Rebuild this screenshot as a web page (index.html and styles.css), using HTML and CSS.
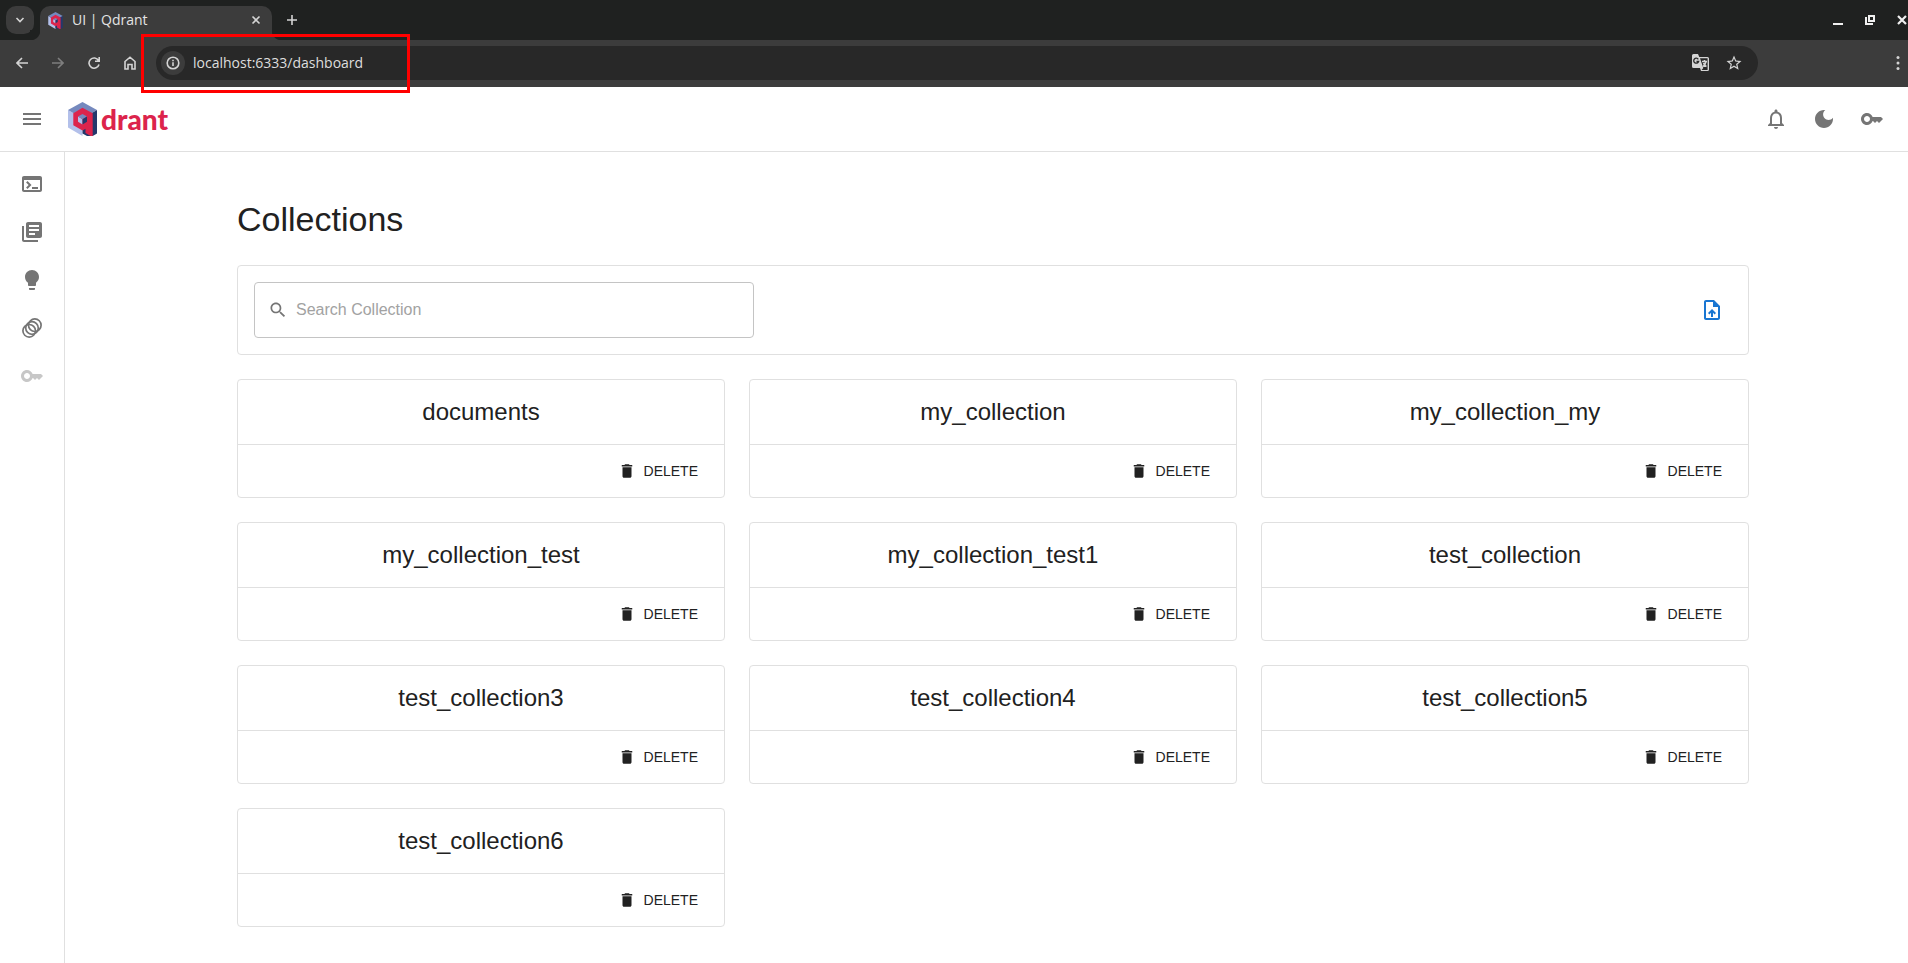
FILE: index.html
```html
<!DOCTYPE html>
<html lang="en">
<head>
<meta charset="utf-8">
<title>UI | Qdrant</title>
<link rel="stylesheet" href="styles.css">
</head>
<body>
<svg class="sprite" aria-hidden="true">
  <symbol id="trash" viewBox="0 0 24 24"><path d="M6 19c0 1.100.9 2 2 2h8c1.100 0 2-.9 2-2V7H6v12zM19 4h-3.500l-1-1h-5l-1 1H5v2h14V4z"/></symbol>
  <symbol id="key" viewBox="0 0 24 24"><path d="M21 10h-8.350C11.830 7.670 9.610 6 7 6c-3.310 0-6 2.690-6 6s2.690 6 6 6c2.610 0 4.830-1.670 5.650-4H13l2 2 2-2 2 2 4-4.040L21 10zM7 15c-1.650 0-3-1.350-3-3s1.350-3 3-3 3 1.350 3 3-1.350 3-3 3z"/></symbol>
  <symbol id="cube" viewBox="0 0 29 34">
    <path fill="#b3c0ea" d="M0 8 14.500 16.500V34L0 25.500z"/>
    <path fill="#7589be" d="M14.500 0 29 8 14.500 16.500 0 8z"/>
    <path fill="#24386c" d="M29 8v23.500L24.700 34H19l-4.500-2.500v-15z"/>
    <path fill="#dc244c" d="M14.500 5.700 24.700 11.200V34h-2L17.500 31v-4.200l-3 1.700-9.200-5.300v-12z"/>
    <path fill="#b3c0ea" d="M10 14.600l4.500 2.600v5.300L10 19.800z"/>
    <path fill="#7589be" d="M14.500 12l4.500 2.600-4.500 2.600-4.500-2.600z"/>
    <path fill="#24386c" d="M19 14.600v5.200l-4.500 2.700v-5.300z"/>
  </symbol>
</svg>

<div class="browser">
  <div class="tabs">
    <button class="tab-search" aria-label="Search tabs"><svg viewBox="0 0 10 10" width="10" height="10"><path class="line" d="M1.500 3 5 6.500 8.500 3"/></svg></button>
    <div class="tab">
      <svg class="favicon"><use href="#cube"/></svg>
      <span class="tab-title">UI | Qdrant</span>
      <button class="plain" aria-label="Close tab"><svg viewBox="0 0 10 10" width="10" height="10"><path class="line" d="M1.500 1.500l7 7M8.500 1.500l-7 7"/></svg></button>
    </div>
    <button class="plain new-tab" aria-label="New tab"><svg viewBox="0 0 12 12" width="12" height="12"><path class="line" d="M6 1v10M1 6h10"/></svg></button>
    <div class="window-buttons">
      <button class="plain" aria-label="Minimize"><svg viewBox="0 0 10 10" width="10" height="10"><path d="M0 8h10v2H0z"/></svg></button>
      <button class="plain" aria-label="Restore"><svg viewBox="0 0 10 10" width="10" height="10"><path fill-rule="evenodd" d="M3 0h7v7H3zM5 2v3h3V2zM0 2h2v6h6v2H0z"/></svg></button>
      <button class="plain" aria-label="Close"><svg viewBox="0 0 10 10" width="10" height="10"><path class="line thick" d="M1 1l8 8M9 1 1 9"/></svg></button>
    </div>
  </div>
  <div class="toolbar">
    <button class="plain" aria-label="Back"><svg viewBox="0 0 12 12" width="12" height="12"><path class="line" d="M12 6H1M6 1 1 6l5 5"/></svg></button>
    <button class="plain dim" aria-label="Forward"><svg viewBox="0 0 12 12" width="12" height="12"><path class="line" d="M0 6h11M6 1l5 5-5 5"/></svg></button>
    <button class="plain" aria-label="Reload"><svg viewBox="0 0 12 12" width="12" height="12"><path class="line" d="M10.500 3.500A5.100 5.100 0 1 0 11 7.500M11.200 0v4.200H7"/></svg></button>
    <button class="plain" aria-label="Home"><svg viewBox="0 0 12 14" width="12" height="14"><path class="line" d="M1 5.500 6 1.200l5 4.300V13H8V8.500H4V13H1z"/></svg></button>
    <div class="address">
      <button class="site-info" aria-label="Site information"><svg viewBox="0 0 14 14" width="14" height="14"><circle class="line" cx="7" cy="7" r="5.800"/><path d="M6.200 6.200h1.600V10H6.200zM6.200 3.800h1.600v1.500H6.200z"/></svg></button>
      <input class="url" type="text" aria-label="Address" value="localhost:6333/dashboard">
      <button class="plain" aria-label="Translate"><svg viewBox="0 0 17 17" width="17" height="17"><path d="M1.500 0H6l1.300 3H15.500Q17 3 17 4.500v11Q17 17 15.500 17H9l-1-3H1.500Q0 14 0 12.500v-11Q0 0 1.500 0zM8 4.300 11.300 14 9.600 16h6V4.300z" fill-rule="evenodd"/><path class="g" d="M6.300 5.300A2.500 2.500 0 1 0 6.600 7.500H4.500"/><path class="line" d="M10 7.500h5M12.500 6v1.500M14 7.500q-.5 3-3 5M11.500 9q1 2.500 3 3.500"/></svg></button>
      <button class="plain" aria-label="Bookmark"><svg viewBox="0 0 24 24" width="18" height="18"><path d="m22 9.240-7.190-.62L12 2 9.190 8.630 2 9.240l5.460 4.730L5.820 21 12 17.270 18.180 21l-1.630-7.030L22 9.240zM12 15.400l-3.760 2.270 1-4.280-3.320-2.880 4.380-.38L12 6.100l1.710 4.040 4.380.38-3.320 2.880 1 4.280L12 15.400z"/></svg></button>
    </div>
    <button class="plain more" aria-label="Menu"><svg viewBox="0 0 4 14" width="4" height="14"><circle cx="2" cy="1.500" r="1.500"/><circle cx="2" cy="7" r="1.500"/><circle cx="2" cy="12.500" r="1.500"/></svg></button>
  </div>
  <div class="highlight"></div>
</div>

<header class="appbar">
  <button class="icon-button" aria-label="Open menu"><svg viewBox="0 0 24 24"><path d="M3 18h18v-2H3v2zm0-5h18v-2H3v2zm0-7v2h18V6H3z"/></svg></button>
  <a class="logo" href="#"><svg class="logo-mark"><use href="#cube"/></svg><span>drant</span></a>
  <div class="appbar-actions">
    <button class="icon-button" aria-label="Notifications"><svg viewBox="0 0 24 24"><path d="M12 22c1.100 0 2-.9 2-2h-4c0 1.100.9 2 2 2zm6-6v-5c0-3.070-1.630-5.640-4.500-6.320V4c0-.83-.67-1.500-1.500-1.500s-1.500.67-1.500 1.500v.68C7.640 5.360 6 7.920 6 11v5l-2 2v1h16v-1l-2-2zm-2 1H8v-6c0-2.480 1.510-4.500 4-4.500s4 2.020 4 4.500v6z"/></svg></button>
    <button class="icon-button" aria-label="Dark mode"><svg viewBox="0 0 24 24"><path d="M12 3c-4.970 0-9 4.030-9 9s4.030 9 9 9 9-4.030 9-9c0-.46-.04-.92-.1-1.360-.98 1.370-2.580 2.260-4.400 2.260-2.980 0-5.400-2.420-5.400-5.400 0-1.810.89-3.420 2.260-4.400-.44-.06-.9-.1-1.360-.1z"/></svg></button>
    <button class="icon-button" aria-label="API key"><svg><use href="#key"/></svg></button>
  </div>
</header>

<div class="layout">
  <nav class="sidebar" aria-label="Main">
    <a class="icon-button" href="#" aria-label="Console"><svg viewBox="0 0 24 24"><path d="M20 4H4c-1.110 0-2 .9-2 2v12c0 1.100.89 2 2 2h16c1.100 0 2-.9 2-2V6c0-1.100-.89-2-2-2zm0 14H4V8h16v10zm-2-1h-6v-2h6v2zM7.500 17l-1.410-1.410L8.670 13l-2.590-2.590L7.500 9l4 4-4 4z"/></svg></a>
    <a class="icon-button" href="#" aria-label="Collections"><svg viewBox="0 0 24 24"><path d="M4 6H2v14c0 1.100.9 2 2 2h14v-2H4V6zm16-4H8c-1.100 0-2 .9-2 2v12c0 1.100.9 2 2 2h12c1.100 0 2-.9 2-2V4c0-1.100-.9-2-2-2zm-1 9H9V9h10v2zm-4 4H9v-2h6v2zm4-8H9V5h10v2z"/></svg></a>
    <a class="icon-button" href="#" aria-label="Tutorial"><svg viewBox="0 0 24 24"><path d="M9 21c0 .5.400 1 1 1h4c.6 0 1-.5 1-1v-1H9v1zm3-19C8.100 2 5 5.100 5 9c0 2.400 1.200 4.500 3 5.700V17c0 .5.400 1 1 1h6c.6 0 1-.5 1-1v-2.300c1.800-1.300 3-3.400 3-5.700 0-3.900-3.100-7-7-7z"/></svg></a>
    <a class="icon-button" href="#" aria-label="Datasets"><svg viewBox="0 0 24 24"><g class="rings"><circle cx="9.200" cy="14.800" r="6.300"/><circle cx="12" cy="12" r="6.300"/><circle cx="14.800" cy="9.200" r="6.300"/></g></svg></a>
    <button class="icon-button" disabled aria-label="Access tokens"><svg><use href="#key"/></svg></button>
  </nav>

  <main class="main">
    <div class="container">
      <h1 class="title">Collections</h1>
      <section class="panel searchbar">
        <label class="search">
          <svg viewBox="0 0 24 24"><path d="M15.500 14h-.79l-.28-.27C15.410 12.590 16 11.110 16 9.500 16 5.910 13.090 3 9.500 3S3 5.910 3 9.500 5.910 16 9.500 16c1.610 0 3.090-.59 4.230-1.570l.27.28v.79l5 4.990L20.490 19l-4.990-5zm-6 0C7.010 14 5 11.990 5 9.500S7.010 5 9.500 5 14 7.010 14 9.500 11.990 14 9.500 14z"/></svg>
          <input type="text" placeholder="Search Collection" aria-label="Search Collection">
        </label>
        <button class="icon-button upload" aria-label="Upload snapshot"><svg viewBox="0 0 24 24"><path d="M14 2H6c-1.100 0-1.990.9-1.990 2L4 20c0 1.100.89 2 1.990 2H18c1.100 0 2-.9 2-2V8l-6-6zm4 18H6V4h7v5h5v11zM8 15.010l1.410 1.410L11 14.840V19h2v-4.160l1.590 1.590L16 15.010 12.010 11 8 15.010z"/></svg></button>
      </section>
      <div class="grid">
        <article class="panel"><h2>documents</h2><div class="actions"><button class="delete"><svg><use href="#trash"/></svg>DELETE</button></div></article>
        <article class="panel"><h2>my_collection</h2><div class="actions"><button class="delete"><svg><use href="#trash"/></svg>DELETE</button></div></article>
        <article class="panel"><h2>my_collection_my</h2><div class="actions"><button class="delete"><svg><use href="#trash"/></svg>DELETE</button></div></article>
        <article class="panel"><h2>my_collection_test</h2><div class="actions"><button class="delete"><svg><use href="#trash"/></svg>DELETE</button></div></article>
        <article class="panel"><h2>my_collection_test1</h2><div class="actions"><button class="delete"><svg><use href="#trash"/></svg>DELETE</button></div></article>
        <article class="panel"><h2>test_collection</h2><div class="actions"><button class="delete"><svg><use href="#trash"/></svg>DELETE</button></div></article>
        <article class="panel"><h2>test_collection3</h2><div class="actions"><button class="delete"><svg><use href="#trash"/></svg>DELETE</button></div></article>
        <article class="panel"><h2>test_collection4</h2><div class="actions"><button class="delete"><svg><use href="#trash"/></svg>DELETE</button></div></article>
        <article class="panel"><h2>test_collection5</h2><div class="actions"><button class="delete"><svg><use href="#trash"/></svg>DELETE</button></div></article>
        <article class="panel"><h2>test_collection6</h2><div class="actions"><button class="delete"><svg><use href="#trash"/></svg>DELETE</button></div></article>
      </div>
    </div>
  </main>
</div>
</body>
</html>
```
FILE: styles.css
```css
* { box-sizing: border-box; }

body {
  display: flex;
  flex-direction: column;
  min-height: 100vh;
  margin: 0;
  background: #fff;
  color: #212121;
  font-family: "Liberation Sans", Arial, sans-serif;
}

button, input { font: inherit; color: inherit; }
button { padding: 0; border: 0; background: none; cursor: pointer; }
svg { display: block; fill: currentColor; }
.sprite { position: absolute; width: 0; height: 0; }
.line { fill: none; stroke: currentColor; stroke-width: 1.6; }
.thick { stroke-width: 2.2; }

/* Browser window */
.browser {
  position: relative;
  z-index: 1;
  background: #3c3c3c;
  color: #d4d4d4;
  font-family: "Open Sans", "Noto Sans", sans-serif;
  font-size: 14px;
}
.tabs {
  display: flex;
  align-items: center;
  height: 40px;
  padding-left: 6px;
  background: #1f2120;
}
.tab-search {
  display: grid;
  place-items: center;
  width: 28px;
  height: 28px;
  border-radius: 10px;
  background: #3c3c3c;
}
.tab {
  position: relative;
  display: flex;
  align-items: center;
  gap: 9px;
  align-self: flex-end;
  width: 232px;
  height: 34px;
  margin-left: 6px;
  padding: 0 11px 6px 8px;
  border-radius: 10px 10px 0 0;
  background: #3c3c3c;
}
.tab::before,
.tab::after {
  content: "";
  position: absolute;
  bottom: 0;
  width: 10px;
  height: 10px;
}
.tab::before { right: 100%; background: radial-gradient(circle at 0 0, #1f2120 10px, #3c3c3c 11px); }
.tab::after { left: 100%; background: radial-gradient(circle at 100% 0, #1f2120 10px, #3c3c3c 11px); }
.favicon { width: 15px; height: 17px; }
.tab-title { flex: 1; line-height: 20px; color: #e4e4e4; }
.plain { display: grid; place-items: center; flex: none; }
.new-tab { margin-left: 14px; }
.window-buttons {
  display: flex;
  gap: 22px;
  margin-left: auto;
  margin-right: 1px;
  color: #f0f0f0;
}
.toolbar {
  display: flex;
  align-items: center;
  gap: 24px;
  height: 47px;
  padding: 0 8px 2px 16px;
}
.dim { color: #7e7e7e; }
.address {
  display: flex;
  align-items: center;
  flex: 1;
  gap: 16px;
  height: 34px;
  margin-left: -4px;
  padding: 0 15px 0 5px;
  border-radius: 17px;
  background: #282828;
}
.site-info {
  display: grid;
  place-items: center;
  width: 24px;
  height: 24px;
  border-radius: 12px;
  background: #3c3c3c;
}
.url {
  flex: 1;
  min-width: 0;
  margin-left: -8px;
  padding: 0;
  border: 0;
  outline: 0;
  background: none;
  color: #dedede;
}
.g { fill: none; stroke: #282828; stroke-width: 1.3; }
.more { margin-left: 114px; }
.highlight {
  position: absolute;
  top: 34px;
  left: 141px;
  width: 269px;
  height: 59px;
  border: 3px solid #f00;
  pointer-events: none;
}

/* Application bar */
.appbar {
  display: flex;
  align-items: center;
  height: 65px;
  padding: 0 16px 0 12px;
  border-bottom: 1px solid #e0e0e0;
}
.icon-button {
  display: grid;
  place-items: center;
  width: 40px;
  height: 40px;
  border-radius: 20px;
  color: #757575;
}
.icon-button svg { width: 24px; height: 24px; }
.icon-button:disabled { color: #c7c7c7; }
.logo {
  display: flex;
  align-items: center;
  gap: 4px;
  margin-left: 16px;
  color: #dc244c;
  font-family: Lato, sans-serif;
  font-size: 28px;
  font-weight: 900;
  line-height: 32px;
  text-decoration: none;
}
.logo-mark { width: 29px; height: 34px; }
.appbar-actions { display: flex; gap: 8px; margin-left: auto; }

/* Page layout */
.layout { display: flex; flex: 1; }
.sidebar {
  display: flex;
  flex-direction: column;
  align-items: center;
  gap: 8px;
  width: 65px;
  padding-top: 12px;
  border-right: 1px solid #e0e0e0;
}
.rings { fill: none; stroke: currentColor; stroke-width: 1.7; }
.main { flex: 1; padding: 46px 24px 24px 37px; }
.container { max-width: 1512px; margin: 0 auto; }
.title { margin: 0 0 25px; font-size: 34px; font-weight: 400; line-height: 42px; }
.panel { border: 1px solid #e0e0e0; border-radius: 4px; }
.searchbar {
  display: flex;
  align-items: center;
  justify-content: space-between;
  margin-bottom: 24px;
  padding: 16px;
}
.search {
  display: flex;
  align-items: center;
  gap: 8px;
  width: 500px;
  height: 56px;
  padding: 0 13px;
  border: 1px solid #c4c4c4;
  border-radius: 4px;
}
.search svg { width: 20px; height: 20px; fill: #757575; }
.search input { flex: 1; min-width: 0; padding: 0; border: 0; outline: 0; font-size: 16px; line-height: 24px; background: none; }
.search input::placeholder { color: #a2a2a2; opacity: 1; }
.upload { color: #1976d2; }
.grid { display: grid; grid-template-columns: repeat(3, minmax(0, 1fr)); gap: 24px; }
.grid h2 {
  margin: 0;
  padding: 16px;
  font-size: 24px;
  font-weight: 400;
  line-height: 32px;
  text-align: center;
}
.actions {
  display: flex;
  justify-content: flex-end;
  padding: 8px 18px;
  border-top: 1px solid #e0e0e0;
}
.delete {
  display: flex;
  align-items: center;
  gap: 8px;
  padding: 6px 8px;
  font-size: 14px;
  line-height: 24px;
}
.delete svg { width: 18px; height: 18px; }
```
